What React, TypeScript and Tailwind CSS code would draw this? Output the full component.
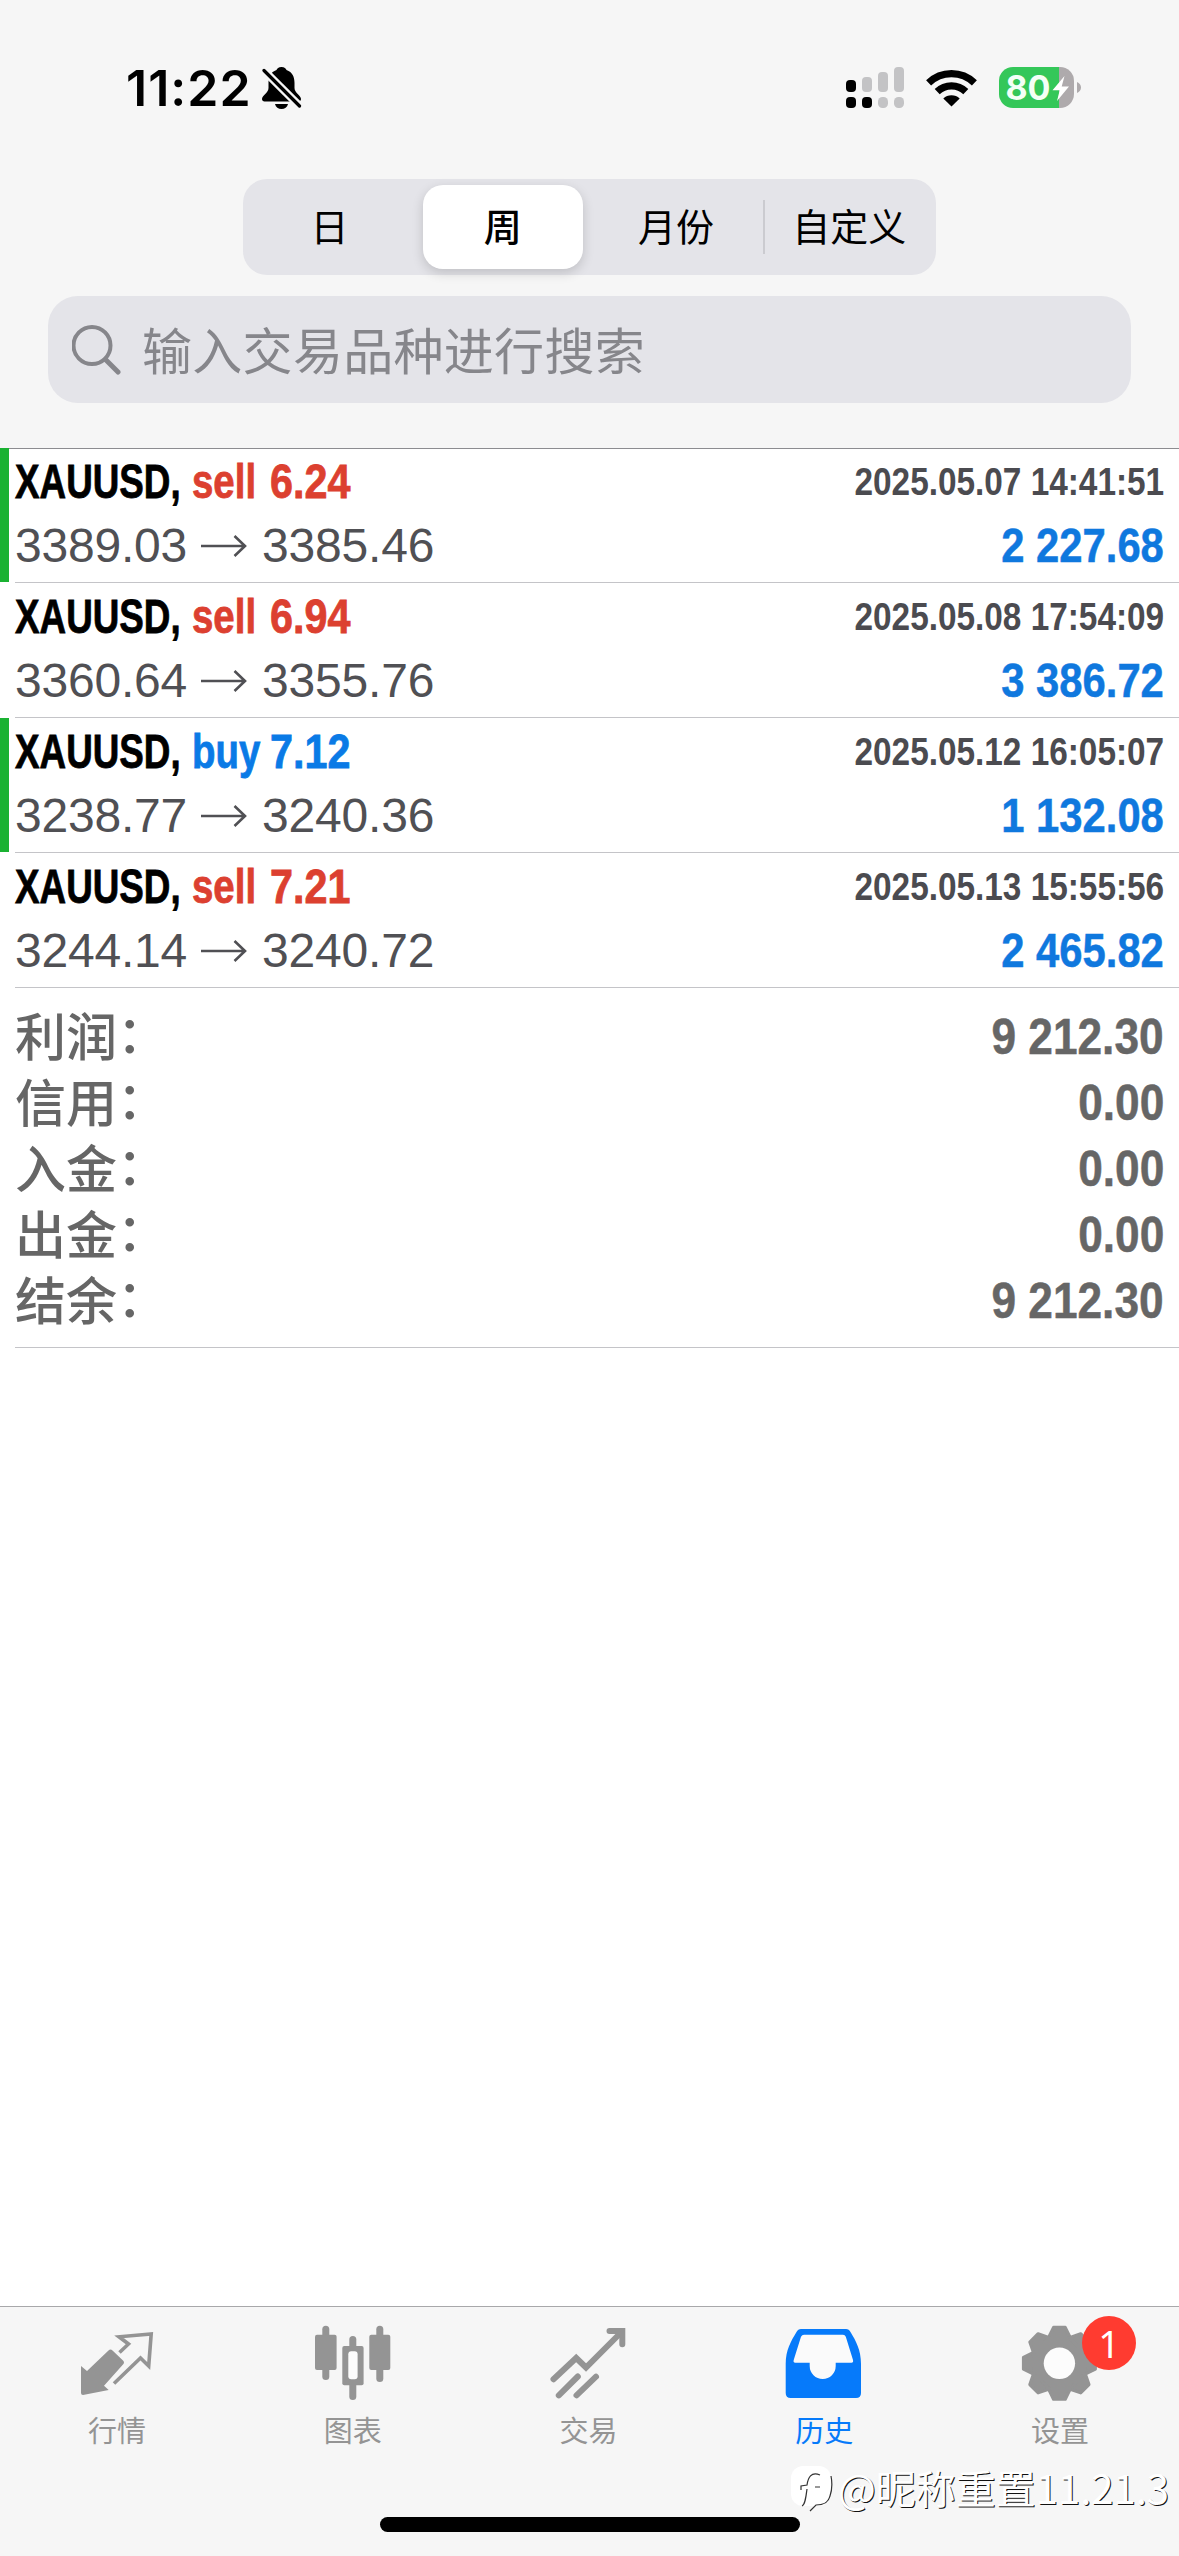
import type { ReactNode } from 'react'
import clsx from 'clsx'

type Deal = {
  side: 'buy' | 'sell'
  volume: string
  open: string
  close: string
  time: string
  profit: string
  marked?: boolean
}

const DEALS: Deal[] = [
  { side: 'sell', volume: '6.24', open: '3389.03', close: '3385.46', time: '2025.05.07 14:41:51', profit: '2 227.68', marked: true },
  { side: 'sell', volume: '6.94', open: '3360.64', close: '3355.76', time: '2025.05.08 17:54:09', profit: '3 386.72' },
  { side: 'buy', volume: '7.12', open: '3238.77', close: '3240.36', time: '2025.05.12 16:05:07', profit: '1 132.08', marked: true },
  { side: 'sell', volume: '7.21', open: '3244.14', close: '3240.72', time: '2025.05.13 15:55:56', profit: '2 465.82' },
]

const TOTALS = [
  { label: '利润', value: '9 212.30' },
  { label: '信用', value: '0.00' },
  { label: '入金', value: '0.00' },
  { label: '出金', value: '0.00' },
  { label: '结余', value: '9 212.30' },
]

const PERIODS = ['日', '周', '月份', '自定义']

function StatusBar() {
  return (
    <div className="flex h-[179px] items-start justify-between pt-[58px] pr-[98px] pl-[126px]">
      <div className="flex h-[60px] items-center">
        <span className="w-[136px] font-['Inter'] text-[50px] leading-[60px] font-semibold tracking-[1px]">11:22</span>
        <svg width="40" height="44" viewBox="0 0 40 44">
          <path d="M19.500 1c-3 0-4.500 1.800-5 3C8.500 6 6.500 11 6.500 17v5c0 5-6.500 7.500-6.500 11 0 1.500 1 2.500 2.500 2.500h34c1.500 0 2.500-1 2.500-2.500 0-3.500-6.500-6-6.500-11v-5c0-6-2-11-8-13-.5-1.200-2-3-5-3z" />
          <path d="M13 38h13c-.8 3.200-3.300 5-6.500 5S13.800 41.200 13 38z" />
          <path d="M1.500 4 38 40.500" stroke="#f6f6f6" strokeWidth="8" />
          <path d="M2 4.500 37.500 40" stroke="#000" strokeWidth="3.200" strokeLinecap="round" />
        </svg>
      </div>
      <div className="flex h-[60px] items-center">
        <svg width="58" height="42" viewBox="0 0 58 42">
          <g fill="#c3c3c5">
            <rect x="16" y="10" width="10" height="15" rx="4" />
            <rect x="32" y="5" width="10" height="20" rx="4" />
            <rect x="48" y="0" width="10" height="25" rx="4" />
            <rect x="32" y="30" width="10" height="11" rx="4.500" />
            <rect x="48" y="30" width="10" height="11" rx="4.500" />
          </g>
          <rect x="0" y="13" width="10" height="12" rx="4" />
          <rect x="0" y="30" width="10" height="11" rx="4" />
          <rect x="16" y="30" width="10" height="11" rx="4" />
        </svg>
        <svg className="ml-[22px]" width="51" height="38" viewBox="0 0 51 38">
          <g fill="none" stroke="#000" strokeWidth="7.200">
            <path d="M2.600 13.800a33 33 0 0 1 45.800 0" />
            <path d="M11.200 22.700a20.600 20.600 0 0 1 28.600 0" />
          </g>
          <path d="M17.300 29.400a12 12 0 0 1 16.400 0L25.500 37.600z" />
        </svg>
        <svg className="ml-[22px]" width="82" height="42" viewBox="0 0 82 42">
          <path d="M14 0h46v41H14A14 14 0 0 1 0 27V14A14 14 0 0 1 14 0z" fill="#34c759" />
          <path d="M60 0h1a14 14 0 0 1 14 14v13a14 14 0 0 1-14 14h-1z" fill="#aeaaac" />
          <path d="M78 15c2.500 1 4 3 4 5.500S80.500 25 78 26z" fill="#aeaaac" />
          <path d="M65.500 9 53.500 23.200h7.200L58 34l12-14.500h-7.300z" fill="#fff" />
          <text x="6.500" y="33" fontFamily="Inter" fontWeight="700" fontSize="34" textLength="45" fill="#f4fff6">80</text>
        </svg>
      </div>
    </div>
  )
}

function PeriodPicker() {
  return (
    <div className="mx-auto grid h-24 w-[693px] grid-cols-4 items-center rounded-[24px] bg-[#e4e4e9]">
      {PERIODS.map((period, i) => (
        <div key={period} className="relative flex h-[84px] items-center justify-center px-[7px]">
          {i === 3 && <span className="absolute left-0 h-[54px] w-[2px] bg-[#cbcbd0]" />}
          <span
            className={clsx(
              'h-[84px] w-full text-center text-[38px] leading-[80px] whitespace-nowrap text-black',
              i === 1 && 'rounded-[20px] bg-white font-medium shadow-[0_4px_12px_rgba(0,0,0,0.16)]',
            )}
          >
            {period}
          </span>
        </div>
      ))}
    </div>
  )
}

function SearchField() {
  return (
    <div className="mx-12 mt-[21px] flex h-[107px] items-start rounded-[30px] bg-[#e4e4e9] pl-6 text-[#86868b]">
      <svg className="mt-[29px]" width="49" height="50" viewBox="0 0 49 50" fill="none" stroke="currentColor" strokeLinecap="round">
        <circle cx="20" cy="20.500" r="18.500" strokeWidth="4" />
        <path d="M33.500 34.500 46 47" strokeWidth="5" />
      </svg>
      <span className="ml-[21px] text-[50px] leading-[104px] tracking-[0.3px]">输入交易品种进行搜索</span>
    </div>
  )
}

function DealRow({ deal, first }: { deal: Deal; first: boolean }) {
  const sideColor = deal.side === 'sell' ? 'text-[#dc4030]' : 'text-[#0a7ae6]'

  return (
    <div className={clsx('flex h-[135px]', first && '-mt-px')}>
      <div className={clsx('mr-[6px] mb-px w-[9px]', deal.marked && 'bg-[#1ab232]')} />
      <div className="flex-1 border-b border-[#c4c4c8] pr-[15px] font-['Liberation_Sans']">
        <div className="flex h-[68px] items-center justify-between">
          <div className="flex text-[48px] leading-[70px] font-bold whitespace-nowrap [-webkit-text-stroke:0.8px_currentColor]">
            <span className="w-[177px] origin-left scale-x-[0.767] text-black">XAUUSD,</span>
            <span className={clsx('w-[78px] origin-left scale-x-[0.8]', sideColor)}>{deal.side}</span>
            <span className={clsx('origin-left scale-x-[0.86]', sideColor)}>{deal.volume}</span>
          </div>
          <span className="origin-right scale-x-[0.855] text-[39px] leading-[66px] font-bold whitespace-nowrap text-[#4b4b50]">
            {deal.time}
          </span>
        </div>
        <div className="flex h-[60px] items-center justify-between text-[48px] leading-[60px]">
          <div className="flex items-center tracking-[-0.2px] text-[#505054]">
            <span>{deal.open}</span>
            <svg className="mr-[15px] ml-[14px]" width="46" height="24" viewBox="0 0 46 24" fill="none" stroke="currentColor" strokeWidth="2.600">
              <path d="M0 12h44M33.500 2 44 12 33.500 22" />
            </svg>
            <span>{deal.close}</span>
          </div>
          <span className="origin-right scale-x-[0.87] font-bold text-[#0f78de] [-webkit-text-stroke:0.5px_currentColor]">
            {deal.profit}
          </span>
        </div>
      </div>
    </div>
  )
}

function Totals() {
  return (
    <div className="ml-[15px] h-[360px] border-b border-[#c4c4c8] pt-4 pr-[15px] text-[#666]">
      {TOTALS.map((row) => (
        <div key={row.label} className="flex h-[66px] items-start justify-between">
          <div className="flex text-[51px] leading-[60px] font-medium">
            <span>{row.label}</span>
            <span className="-mt-[3px]">：</span>
          </div>
          <span className="origin-right scale-x-[0.885] font-['Liberation_Sans'] text-[50px] leading-[67px] font-bold [-webkit-text-stroke:0.5px_currentColor]">
            {row.value}
          </span>
        </div>
      ))}
    </div>
  )
}

function QuotesIcon() {
  return (
    <>
      <path d="M3 44l6 5 21.500-20.500q2-1.800 4 0L45 38.500q2 2 0 4L26 63.700l4.700 4.300L5 73q-2 0-2-2z" fill="currentColor" />
      <path d="M41.500 30.500 50.500 22 41 14.800 73.200 12 70.700 44 62.500 36 36 61.500" fill="none" stroke="currentColor" strokeWidth="3.600" />
    </>
  )
}

function ChartIcon() {
  return (
    <g fill="currentColor">
      <rect x="1" y="12.700" width="21.600" height="35.300" rx="2" />
      <rect x="8.300" y="3.700" width="7" height="54.300" rx="3.500" />
      <rect x="35.300" y="14" width="7" height="64" rx="3.500" />
      <rect x="28.300" y="24" width="21.300" height="39.300" rx="2" />
      <rect x="34.300" y="29.300" width="9.300" height="28" rx="3" fill="#fcfcfc" />
      <rect x="55.300" y="12.700" width="21" height="35.300" rx="2" />
      <rect x="62.300" y="3.700" width="7" height="56.300" rx="3.500" />
    </g>
  )
}

function TradeIcon() {
  return (
    <g fill="none" stroke="currentColor" strokeWidth="6" strokeLinecap="round">
      <path d="M4.500 57.300 27.200 36 37 45.500 72.500 10" />
      <path d="M60.500 9H73.300V22.300" />
      <path d="M9.800 73.300 28.800 54.500M27.500 73.300 47 54.700" />
    </g>
  )
}

function HistoryIcon() {
  return (
    <>
      <path d="M16 7H61q3 0 4.500 3C71 19 76 28 76 42V71q0 5-5 5H5.700q-5 0-5-5V42C.7 28 6 19 11.500 10q1.500-3 4.500-3z" fill="currentColor" />
      <path d="M19 12.700H58q2 0 2.800 2L68 38q.6 2.700-1.500 2.700H50.700V44a13 13 0 0 1-26 0V40.700H10.200Q8 40.700 8.700 38L16 14.700q1-2 3-2z" fill="#fafafa" />
    </>
  )
}

function SettingsIcon() {
  return (
    <g fill="currentColor" stroke="currentColor" strokeWidth="3" strokeLinejoin="round">
      <circle cx="38.400" cy="41.300" r="28" />
      {[0, 45, 90, 135, 180, 225, 270, 315].map((deg) => (
        <path key={deg} d="M32.500 5.300H44.300L49.500 16H27.300z" transform={`rotate(${deg} 38.400 41.300)`} />
      ))}
      <circle cx="38.400" cy="41.300" r="15.700" fill="#fcfcfc" stroke="none" />
    </g>
  )
}

const TABS: { label: string; icon: ReactNode; active?: boolean; badge?: number }[] = [
  { label: '行情', icon: <QuotesIcon /> },
  { label: '图表', icon: <ChartIcon /> },
  { label: '交易', icon: <TradeIcon /> },
  { label: '历史', icon: <HistoryIcon />, active: true },
  { label: '设置', icon: <SettingsIcon />, badge: 1 },
]

function TabBar() {
  return (
    <div className="relative flex h-[250px] flex-col items-center border-t border-[#a8a8aa] bg-[#f6f6f6]">
      <div className="flex w-full">
        {TABS.map((tab) => (
          <div
            key={tab.label}
            className={clsx('flex flex-1 flex-col items-center pt-[15px]', tab.active ? 'text-[#067afa]' : 'text-[#949494]')}
          >
            <div className="relative size-20">
              <svg width="80" height="80" viewBox="0 0 80 80">
                {tab.icon}
              </svg>
              {tab.badge && (
                <span className="absolute -top-[6px] left-[61px] flex size-[54px] items-center justify-center rounded-full bg-[#ff3b30] font-['Noto_Sans'] text-[38px] leading-[54px] text-white">
                  {tab.badge}
                </span>
              )}
            </div>
            <span className="mt-[7px] mb-[3px] pr-[2px] text-[29px] leading-[40px]">{tab.label}</span>
          </div>
        ))}
      </div>
      <div className="mt-[65px] h-[15px] w-[420px] rounded-full bg-black" />
      {/* Author watermark */}
      <div className="absolute top-[153px] right-[10px] flex items-center">
        <svg className="mr-[5px]" width="42" height="50" viewBox="0 0 42 50" fill="none">
          <rect x="0" y="4" width="40" height="40" rx="12" fill="#fff" />
          <path d="M40 14c1 5 1 14-1 20-2 8-8 9-14 9l-6 6" stroke="#333" strokeWidth="1.200" />
          <path d="M29 13c-9-4-12 3-13 10l-6 1v4M24 25h5M16 27c-1 8-2 16-5 17" stroke="#333" strokeWidth="1.200" />
        </svg>
        <span className="text-[40px] leading-[54px] whitespace-nowrap text-white [text-shadow:1px_1px_0_#111]">
          @昵称重置11.21.3
        </span>
      </div>
    </div>
  )
}

export default function App() {
  return (
    <main className="flex h-[2556px] w-[1179px] flex-col overflow-hidden bg-white font-['Noto_Sans_CJK_SC',sans-serif]">
      <header className="h-[448px] shrink-0 bg-[#f6f6f6]">
        <StatusBar />
        <PeriodPicker />
        <SearchField />
      </header>
      <section className="flex-1 border-t border-[#8c8c90]">
        {DEALS.map((deal, i) => (
          <DealRow key={deal.time} deal={deal} first={i === 0} />
        ))}
        <Totals />
      </section>
      <TabBar />
    </main>
  )
}
